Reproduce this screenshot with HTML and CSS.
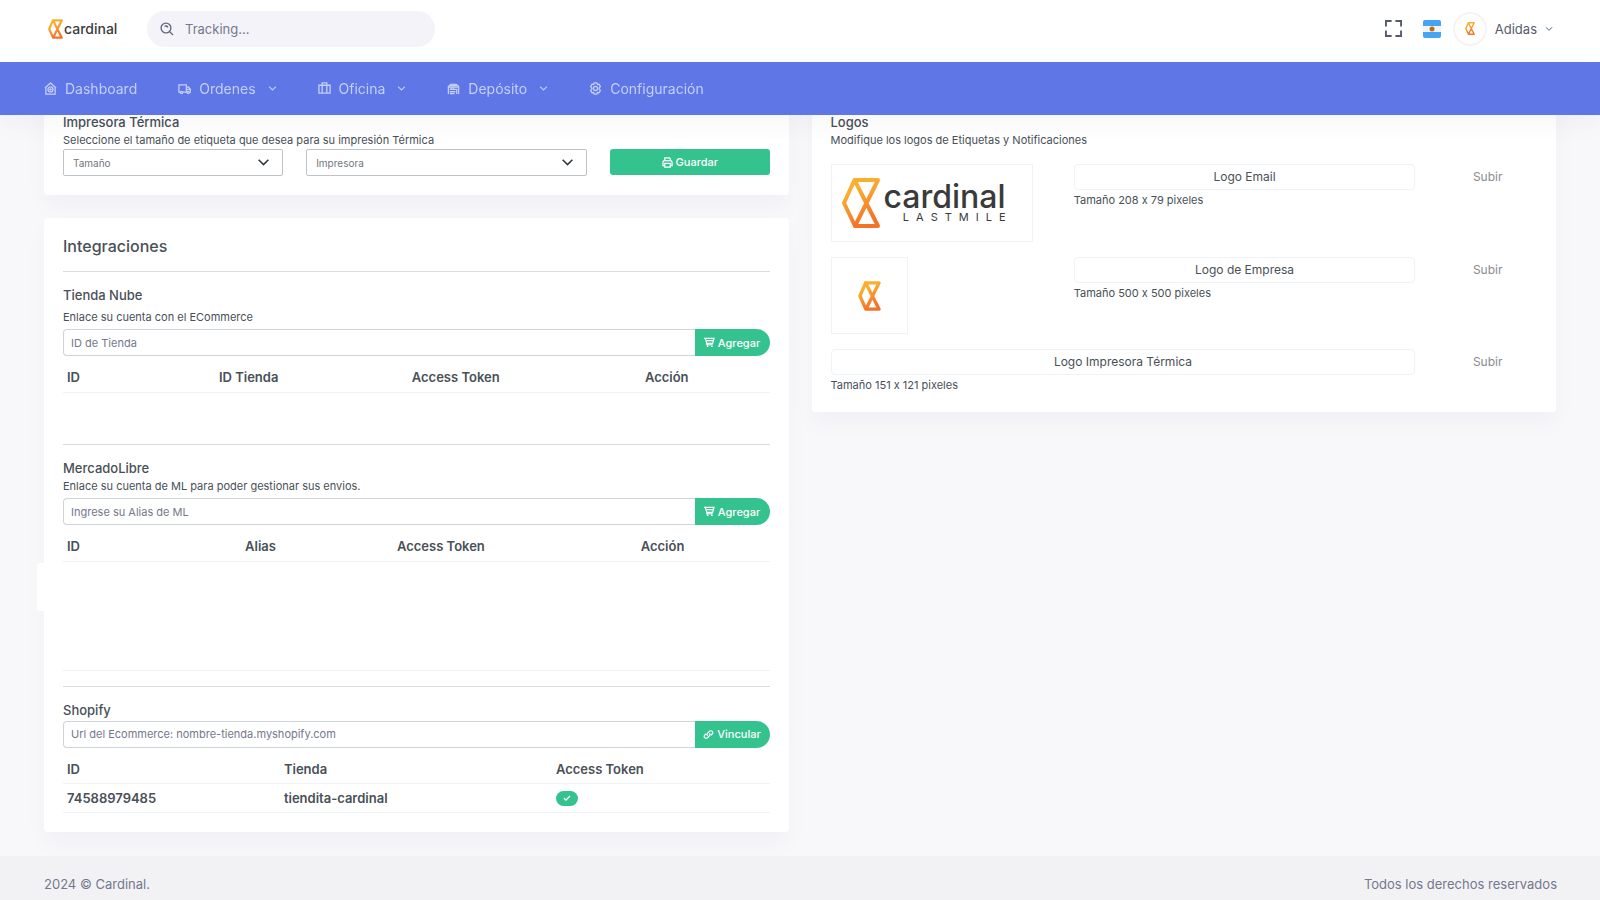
FILE: index.html
```html
<!DOCTYPE html>
<html lang="es">
<head>
<meta charset="utf-8">
<meta name="viewport" content="width=device-width, initial-scale=1">
<title>Cardinal - Configuración</title>
<link rel="stylesheet" href="styles.css">
</head>
<body>
<svg class="defs" aria-hidden="true">
  <defs>
    <linearGradient id="sun" x1="0" y1="0" x2="0.4" y2="1">
      <stop offset="0.3" stop-color="#fbae30"/><stop offset="1" stop-color="#f4732a"/>
    </linearGradient>
    <symbol id="mark" viewBox="0 0 38 50">
      <path d="M12.5 2H36L13 48H36L12.5 2L2 25L13 48" fill="none" stroke="url(#sun)" stroke-width="4" stroke-linejoin="round"/>
    </symbol>
    <symbol id="mark-bold" viewBox="0 0 38 50">
      <path d="M12.5 3H35L13 47H35L12.5 3L3 25L13 47" fill="none" stroke="url(#sun)" stroke-width="5.500" stroke-linejoin="round"/>
    </symbol>
    <symbol id="chevron" viewBox="0 0 12 12"><path d="M1.500 3.500L6 8l4.500-4.500" fill="none" stroke="currentColor" stroke-width="1.500"/></symbol>
    <symbol id="cart" viewBox="0 0 12 12"><path d="M0 1.500h11L9.500 7H3L1.500 1.500M3 4h7M3.500 7l-.5 1.500h6.500" fill="none" stroke="currentColor" stroke-width="1.200"/><circle cx="4" cy="10" r="1" fill="currentColor"/><circle cx="8.500" cy="10" r="1" fill="currentColor"/></symbol>
  </defs>
</svg>

<header class="header">
  <div class="topbar">
    <a class="brand" href="#" aria-label="cardinal"><svg class="brand-mark"><use href="#mark-bold"/></svg><span>cardinal</span></a>
    <label class="search">
      <svg viewBox="0 0 14 14" fill="none" stroke="currentColor" stroke-width="1.400"><circle cx="6" cy="6" r="4.900"/><path d="M9.500 9.500l3.500 3.500M4.500 4.500q2-1.500 3.500 1"/></svg>
      <input type="search" placeholder="Tracking..." aria-label="Tracking">
    </label>
    <div class="tools">
      <button class="tool" type="button" aria-label="Pantalla completa"><svg class="expand" viewBox="0 0 18 18" fill="none" stroke="#555b6d" stroke-width="2"><path d="M1 7V1h6M11 1h6v6M17 11v6h-6M7 17H1v-6"/></svg></button>
      <button class="tool" type="button" aria-label="Idioma"><svg class="flag" viewBox="0 0 18 18"><rect width="18" height="18" rx="2" fill="#45a5f5"/><path fill="#f3f4f8" d="M0 6h18v6H0z"/><circle cx="9" cy="9" r="2.500" fill="#c46a12"/></svg></button>
      <button class="tool user" type="button"><span class="avatar"><svg><use href="#mark-bold"/></svg></span><span>Adidas</span><svg class="caret"><use href="#chevron"/></svg></button>
    </div>
  </div>
  <nav class="nav">
    <a href="#"><svg viewBox="0 0 14 14" fill="none" stroke="currentColor" stroke-width="1.400"><path d="M1 6.500L7 1l6 5.500M2 6v7h10V6"/><circle cx="7" cy="8" r="2.700"/><circle cx="7" cy="8" r=".7"/></svg>Dashboard</a>
    <a href="#"><svg viewBox="0 0 14 14" fill="none" stroke="currentColor" stroke-width="1.400"><path d="M2.500 11H1V3h8v8H5M9 5.500h2.500L13.400 8v3H12.500M9 11h1M9 8h4"/><circle cx="3.800" cy="11.300" r="1.200"/><circle cx="11" cy="11.300" r="1.200"/></svg>Ordenes<svg class="caret"><use href="#chevron"/></svg></a>
    <a href="#"><svg viewBox="0 0 14 14" fill="none" stroke="currentColor" stroke-width="1.400"><path d="M1 3.500h12V12H1zM4.500 12V1h5v11"/></svg>Oficina<svg class="caret"><use href="#chevron"/></svg></a>
    <a href="#"><svg viewBox="0 0 14 14" fill="none" stroke="currentColor" stroke-width="1.400"><path d="M1.500 13V5L4 2.500h6L12.500 5v8M1 5.500h12M3.500 4h7M3 8h7.500v5M3 10.500h6M3 12.500h5M4.500 6v2M7 6v2"/></svg>Depósito<svg class="caret"><use href="#chevron"/></svg></a>
    <a href="#"><svg viewBox="0 0 14 14" fill="none" stroke="currentColor" stroke-width="1.400" stroke-linejoin="round"><path d="M5.500 1h3l.5 1.700 1.700-.4 1.600 2.700L11 6.300v1.400l1.300 1.300-1.600 2.700-1.700-.4-.5 1.700h-3L5 11.300l-1.700.4L1.700 9 3 7.700V6.300L1.700 5l1.600-2.700 1.700.4z"/><circle cx="7" cy="7" r="2.200"/></svg>Configuración</a>
  </nav>
</header>

<main class="content">
  <div class="column">
    <section class="card">
      <h2 class="label">Impresora Térmica</h2>
      <p class="hint">Seleccione el tamaño de etiqueta que desea para su impresión Térmica</p>
      <form class="printer">
        <div class="select size"><select aria-label="Tamaño"><option>Tamaño</option></select><svg><use href="#chevron"/></svg></div>
        <div class="select device"><select aria-label="Impresora"><option>Impresora</option></select><svg><use href="#chevron"/></svg></div>
        <button class="btn save" type="button"><svg viewBox="0 0 12 12" fill="none" stroke="currentColor" stroke-width="1.300"><path d="M3 4V1h5l1 1v2M3 9.500H1V6q0-2 2-2h6q2 0 2 2v3.500H9M3 7h6v4H3z"/></svg>Guardar</button>
      </form>
    </section>

    <section class="card">
      <h1 class="title">Integraciones</h1>
      <hr>
      <div class="block store">
        <h2 class="label">Tienda Nube</h2>
        <p class="hint">Enlace su cuenta con el ECommerce</p>
        <form class="group"><input type="text" placeholder="ID de Tienda" aria-label="ID de Tienda"><button class="btn" type="button"><svg><use href="#cart"/></svg>Agregar</button></form>
        <table>
          <colgroup><col class="w-a1"><col class="w-a2"><col class="w-a3"><col></colgroup>
          <thead><tr><th>ID</th><th>ID Tienda</th><th>Access Token</th><th>Acción</th></tr></thead>
        </table>
      </div>
      <hr>
      <div class="block market">
        <h2 class="label">MercadoLibre</h2>
        <p class="hint">Enlace su cuenta de ML para poder gestionar sus envios.</p>
        <form class="group"><input type="text" placeholder="Ingrese su Alias de ML" aria-label="Alias de ML"><button class="btn" type="button"><svg><use href="#cart"/></svg>Agregar</button></form>
        <table>
          <colgroup><col class="w-b1"><col class="w-b2"><col class="w-b3"><col></colgroup>
          <thead><tr><th>ID</th><th>Alias</th><th>Access Token</th><th>Acción</th></tr></thead>
          <tbody><tr class="empty"><td></td><td></td><td></td><td></td></tr></tbody>
        </table>
      </div>
      <hr>
      <div class="block">
        <h2 class="label">Shopify</h2>
        <form class="group"><input type="text" placeholder="Url del Ecommerce: nombre-tienda.myshopify.com" aria-label="Url del Ecommerce"><button class="btn" type="button"><svg viewBox="0 0 12 12" fill="none" stroke="currentColor" stroke-width="1.300"><path d="M5 7.500Q3.500 6 5 4.500L7 2.500Q8.500 1.300 10 2.500T10 5.500L8.500 7M7 4.500Q8.500 6 7 7.500L5 9.500Q3.500 10.700 2 9.500T2 6.500L3.500 5"/></svg>Vincular</button></form>
        <table>
          <colgroup><col class="w-c1"><col class="w-c2"><col></colgroup>
          <thead><tr><th>ID</th><th>Tienda</th><th>Access Token</th></tr></thead>
          <tbody><tr><th>74588979485</th><th>tiendita-cardinal</th><td><span class="badge"><svg viewBox="0 0 8 8" fill="none" stroke="#fff" stroke-width="1.300"><path d="M1 4.200L3 6l4-4"/></svg></span></td></tr></tbody>
        </table>
      </div>
    </section>
  </div>

  <div class="column">
    <section class="card">
      <h2 class="label">Logos</h2>
      <p class="hint">Modifique los logos de Etiquetas y Notificaciones</p>
      <div class="logos">
        <div class="logo-row">
          <div class="preview wide"><svg class="full-mark"><use href="#mark"/></svg><div class="wordmark"><span>cardinal</span><small>LASTMILE</small></div></div>
          <div class="upload"><button class="file" type="button">Logo Email</button><p class="hint">Tamaño 208 x 79 pixeles</p></div>
          <button class="send" type="button">Subir</button>
        </div>
        <div class="logo-row">
          <div class="preview square"><svg class="small-mark"><use href="#mark-bold"/></svg></div>
          <div class="upload"><button class="file" type="button">Logo de Empresa</button><p class="hint">Tamaño 500 x 500 pixeles</p></div>
          <button class="send" type="button">Subir</button>
        </div>
        <div class="logo-row">
          <div class="upload full"><button class="file" type="button">Logo Impresora Térmica</button><p class="hint">Tamaño 151 x 121 pixeles</p></div>
          <button class="send" type="button">Subir</button>
        </div>
      </div>
    </section>
  </div>
</main>

<div class="drawer"></div>

<footer class="footer"><span>2024 © Cardinal.</span><span>Todos los derechos reservados</span></footer>
</body>
</html>
```

FILE: styles.css
```css
* { box-sizing: border-box; }
body {
  margin: 0;
  min-height: 100vh;
  display: flex;
  flex-direction: column;
  background: #f8f8fb;
  color: #495057;
  font-family: Inter, "Open Sans", sans-serif;
  font-feature-settings: "calt" 0;
  font-size: 13px;
  line-height: 20px;
}
h1, h2, p { margin: 0; }
button, input, select { font: inherit; color: inherit; }
button { border: 0; background: none; padding: 0; cursor: pointer; }
a { color: inherit; text-decoration: none; }
.defs { position: absolute; width: 0; height: 0; }

/* Header */
.header { position: fixed; top: 0; left: 0; right: 0; z-index: 10; }
.topbar {
  display: flex;
  align-items: center;
  height: 62px;
  padding: 0 47px 5px 48px;
  background: #fff;
}
.brand { display: flex; align-items: center; width: 99px; gap: 1px; color: #3c3c3c; font-size: 14px; font-weight: 500; }
.brand-mark { width: 15px; height: 20px; }
.search {
  display: flex;
  align-items: center;
  gap: 11px;
  width: 288px;
  height: 36px;
  padding: 0 13px;
  border-radius: 18px;
  background: #f3f3f9;
  color: #656a80;
}
.search svg { width: 14px; height: 14px; flex: none; }
.search input { flex: 1; min-width: 0; border: 0; background: none; outline: 0; padding: 0; }
.search input::placeholder { color: #74788d; opacity: 1; }
.tools { display: flex; align-items: center; gap: 21px; margin-left: auto; color: #555b6d; }
.tool { display: flex; align-items: center; }
.expand { width: 17px; height: 17px; }
.flag { width: 18px; height: 18px; }
.user { gap: 8px; margin-left: -9px; }
.avatar {
  display: flex;
  align-items: center;
  justify-content: center;
  width: 34px;
  height: 34px;
  border: 2px solid #f4f4f6;
  border-radius: 50%;
}
.avatar svg { width: 10px; height: 13px; }
.caret { width: 8px; height: 8px; }
.nav {
  display: flex;
  align-items: center;
  gap: 41px;
  height: 53px;
  padding: 0 44px;
  background: #5e76e6;
  color: #c5cef8;
  font-size: 14px;
  box-shadow: 0 12px 24px rgba(18, 38, 63, 0.03);
}
.nav a { display: flex; align-items: center; gap: 8px; }
.nav svg { width: 13px; height: 13px; }
.nav .caret { width: 9px; height: 9px; margin-left: 4px; }

/* Cards */
.content {
  flex: 1;
  display: grid;
  grid-template-columns: 1fr 1fr;
  align-items: start;
  gap: 23px;
  padding: 93px 44px 23px 44px;
}
.column { display: grid; gap: 23px; }
.card {
  padding: 19px;
  border-radius: 4px;
  background: #fff;
  box-shadow: 0 12px 24px rgba(18, 38, 63, 0.03);
}
.title { font-size: 16px; font-weight: 500; line-height: 18px; }
.label { font-size: 13px; font-weight: 500; line-height: 20px; }
.hint { font-size: 11px; line-height: 16px; }
hr { height: 1px; margin: 0; border: 0; background: #d9dbde; }
.title + hr { margin: 16px 0 0; }

.printer { display: grid; grid-template-columns: repeat(12, 1fr); gap: 23px; padding-top: 1px; }
.size { grid-column: span 4; }
.device { grid-column: span 5; }
.save { grid-column: span 3; height: 26px; border-radius: 3px; }
.select { position: relative; }
.select select {
  width: 100%;
  height: 27px;
  padding: 0 9px;
  border: 1px solid #bfc3c8;
  border-radius: 2px;
  background: #fff;
  color: #74787d;
  font-size: 10px;
  appearance: none;
}
.select svg { position: absolute; right: 13px; top: 7px; width: 13px; height: 13px; color: #343a40; pointer-events: none; }
.btn {
  display: flex;
  align-items: center;
  justify-content: center;
  gap: 3px;
  background: #34c38f;
  color: #fff;
  font-size: 11px;
  font-weight: 500;
}
.btn svg { width: 11px; height: 11px; }

.block { padding-top: 13px; }
.store { height: 172px; }
.store .label { margin-bottom: 4px; }
.store .group, .market .group { margin-top: 4px; }
.market { padding-bottom: 15px; }
.group { display: flex; margin-top: 1px; }
.group input {
  flex: 1;
  min-width: 0;
  height: 27px;
  padding: 0 7px;
  border: 1px solid #ced4da;
  border-right: 0;
  border-radius: 4px 0 0 4px;
  font-size: 11px;
}
.group input::placeholder { color: #74788d; opacity: 1; }
.group .btn { height: 27px; width: 75px; border-radius: 0 14px 14px 0; }

table { width: 100%; margin-top: 7px; border-collapse: collapse; table-layout: fixed; }
th, td { height: 29px; padding: 0 4px; border-bottom: 1px solid #eff2f7; text-align: left; font-weight: 600; }
.empty td { height: 109px; }
.w-a1 { width: 21.5%; } .w-a2 { width: 27.3%; } .w-a3 { width: 33%; }
.w-b1 { width: 25.2%; } .w-b2 { width: 21.5%; } .w-b3 { width: 34.5%; }
.w-c1 { width: 30.7%; } .w-c2 { width: 38.5%; }
.badge { display: flex; align-items: center; justify-content: center; width: 22px; height: 15px; border-radius: 8px; background: #34c38f; }
.badge svg { width: 8px; height: 8px; }

/* Logos */
.logos { display: grid; gap: 15px; padding-top: 16px; }
.logo-row { display: grid; grid-template-columns: repeat(12, 1fr); column-gap: 23px; align-items: start; }
.preview { display: flex; align-items: center; border: 1px solid #eff2f7; grid-column: span 4; }
.wide { width: 202px; height: 78px; padding: 0 10px; gap: 4px; }
.square { width: 77px; height: 77px; justify-content: center; }
.full-mark { width: 38px; height: 50px; flex: none; }
.small-mark { width: 23px; height: 30px; }
.wordmark { display: grid; justify-items: end; color: #3a3a3a; }
.wordmark span { font-size: 32px; font-weight: 500; line-height: 28px; }
.wordmark small { font-size: 11px; line-height: 12px; letter-spacing: 7px; margin-right: -7px; }
.upload { grid-column: span 6; }
.upload.full { grid-column: span 10; }
.file { display: block; width: 100%; height: 26px; border: 1px solid #eff2f7; border-radius: 4px; font-size: 12px; }
.upload .hint { margin-top: 2px; }
.send { grid-column: span 2; height: 26px; color: #878b91; font-size: 12px; }

.drawer { position: fixed; left: 37px; top: 563px; width: 30px; height: 48px; border-radius: 3px; background: #fff; }
.footer { display: flex; justify-content: space-between; height: 44px; padding: 18px 43px 0 44px; background: #f2f2f5; color: #74788d; }
```
